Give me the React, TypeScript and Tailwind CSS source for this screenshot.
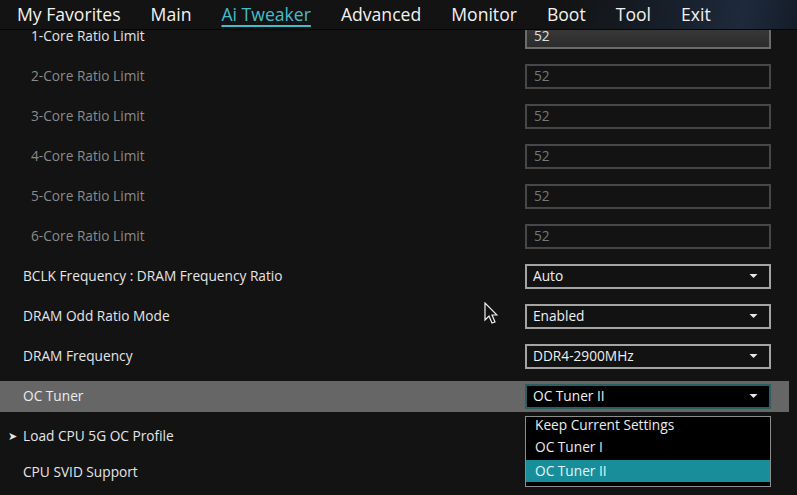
import React from "react";

const font = { fontFamily: '"Open Sans", "Noto Sans", "DejaVu Sans", sans-serif' };

function Caret() {
  return (
    <svg width="9" height="5" viewBox="0 0 9 5" className="absolute right-[11px] top-1/2 -translate-y-1/2">
      <path d="M0.5 0.5 L8.5 0.5 L4.5 4.5 Z" fill="#e8e8e8" />
    </svg>
  );
}

function CoreRow({ n, active }: { n: number; active?: boolean }) {
  return (
    <div className="flex h-[40px] items-center">
      <div className={`w-[525px] pl-[31px] text-[13.7px] ${active ? "text-[#e4e4e4]" : "text-[#8a8a8a]"}`}>
        {n}-Core Ratio Limit
      </div>
      {active ? (
        <div className="flex h-[25px] w-[246px] items-center border-2 border-[#6c6c6c] bg-gradient-to-b from-[#3a3a3a] to-[#2c2c2c] pl-[7px] text-[13.7px] text-[#e0e0e0]">
          52
        </div>
      ) : (
        <div className="flex h-[25px] w-[246px] items-center border-2 border-[#474747] pl-[7px] text-[13.7px] text-[#777777]">
          52
        </div>
      )}
    </div>
  );
}

function SelectRow({ label, value }: { label: string; value: string }) {
  return (
    <div className="flex h-[40px] items-center">
      <div className="w-[525px] pl-[23px] text-[13.7px] text-[#e6e6e6]">{label}</div>
      <div className="relative flex h-[25px] w-[246px] items-center border-2 border-[#a4a4a4] bg-[#121212] pl-[6px] text-[13.7px] text-[#f0f0f0]">
        {value}
        <Caret />
      </div>
    </div>
  );
}

export default function App() {
  const tabs = ["My Favorites", "Main", "Ai Tweaker", "Advanced", "Monitor", "Boot", "Tool", "Exit"];
  return (
    <div className="relative h-[495px] w-[797px] overflow-hidden bg-[#131313]" style={font}>
      {/* top nav */}
      <div className="relative z-10 flex h-[30px] items-center gap-[30px] border-b border-[#060606] bg-[#131313] bg-[linear-gradient(100deg,#131313_0%,#131313_70%,#17202c_85%,#1e2a3c_93%,#141c28_100%)] pl-[17px] text-[17.6px] text-[#f2f2f2]">
        {tabs.map((t) =>
          t === "Ai Tweaker" ? (
            <span key={t} className="text-[#46bccb] underline decoration-[2px] underline-offset-[4px]">
              {t}
            </span>
          ) : (
            <span key={t}>{t}</span>
          )
        )}
      </div>

      {/* rows */}
      <div className="-mt-[14px] flex flex-col">
        <CoreRow n={1} active />
        <CoreRow n={2} />
        <CoreRow n={3} />
        <CoreRow n={4} />
        <CoreRow n={5} />
        <CoreRow n={6} />
        <SelectRow label="BCLK Frequency : DRAM Frequency Ratio" value="Auto" />
        <SelectRow label="DRAM Odd Ratio Mode" value="Enabled" />
        <SelectRow label="DRAM Frequency" value="DDR4-2900MHz" />
        <div className="flex h-[40px] items-center">
          <div className="flex h-[31px] w-[789px] items-center bg-[#666666]">
            <div className="w-[525px] pl-[23px] text-[13.7px] text-[#ececec]">OC Tuner</div>
            <div className="relative flex h-[25px] w-[246px] items-center border-2 border-[#2a5e63] bg-black pl-[6px] text-[13.7px] text-[#f0f0f0]">
              OC Tuner II
              <Caret />
            </div>
          </div>
        </div>
        <div className="flex h-[40px] items-center">
          <div className="flex items-center pl-[8px] text-[13.7px] text-[#e6e6e6]">
            <span className="w-[15px] text-[11px]">➤</span>
            <span>Load CPU 5G OC Profile</span>
          </div>
        </div>
        <div className="flex h-[32px] items-center">
          <div className="pl-[23px] text-[13.7px] text-[#e6e6e6]">CPU SVID Support</div>
        </div>
      </div>

      {/* dropdown list */}
      <div className="absolute left-[525px] top-[416px] flex h-[71px] w-[246px] flex-col border border-[#8c8c8c] bg-black text-[13.7px]">
        <div className="flex h-[17px] items-center pl-[9px] text-[#ececec]">Keep Current Settings</div>
        <div className="flex h-[26px] items-center pl-[9px] text-[#ececec]">OC Tuner I</div>
        <div className="flex h-[22px] items-center bg-[#188e9b] pl-[9px] text-[#e2f6f8]">OC Tuner II</div>
      </div>

      {/* mouse cursor */}
      <svg className="absolute left-[484px] top-[302px]" width="14" height="24" viewBox="0 0 14 24">
        <path d="M1 1 L1 18 L5 14 L8 21 L11 20 L8 13 L13 13 Z" fill="#111" stroke="#f0f0f0" strokeWidth="1.2" strokeLinejoin="miter" />
      </svg>
    </div>
  );
}
